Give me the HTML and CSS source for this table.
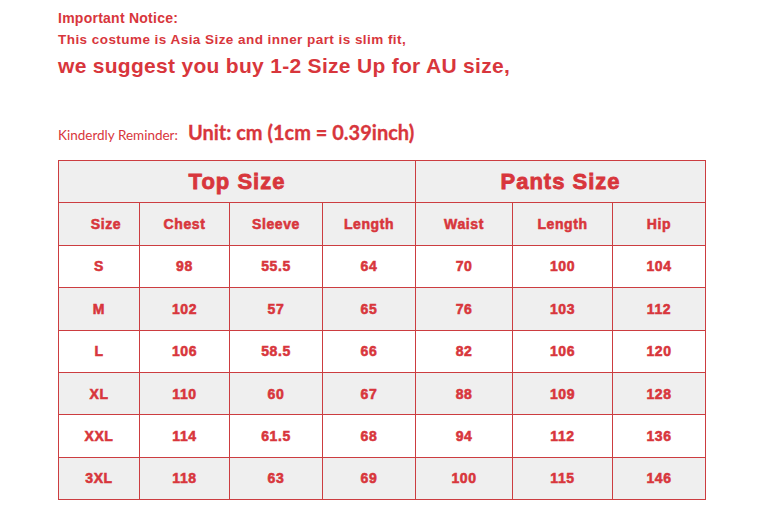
FILE: index.html
```html
<!DOCTYPE html>
<html lang="en">
<head>
<meta charset="utf-8">
<title>Size Chart</title>
<link rel="stylesheet" href="styles.css">
</head>
<body>
<div class="page">
  <div class="notice-title">Important Notice:</div>
  <div class="notice-line">This costume is Asia Size and inner part is slim fit,</div>
  <div class="notice-big">we suggest you buy 1-2 Size Up for AU size,</div>
  <div class="reminder"><span class="reminder-label">Kinderdly Reminder:</span><span class="reminder-unit">Unit: cm (1cm = 0.39inch)</span></div>
  <table class="chart">
    <colgroup>
      <col class="c1"><col class="c2"><col class="c3"><col class="c4"><col class="c5"><col class="c6"><col class="c7">
    </colgroup>
    <tr class="shade group">
      <td colspan="4">Top Size</td>
      <td colspan="3">Pants Size</td>
    </tr>
    <tr class="shade">
      <td class="size-head">Size</td><td>Chest</td><td>Sleeve</td><td>Length</td><td>Waist</td><td>Length</td><td>Hip</td>
    </tr>
    <tr><td>S</td><td>98</td><td>55.5</td><td>64</td><td>70</td><td>100</td><td>104</td></tr>
    <tr class="shade"><td>M</td><td>102</td><td>57</td><td>65</td><td>76</td><td>103</td><td>112</td></tr>
    <tr><td>L</td><td>106</td><td>58.5</td><td>66</td><td>82</td><td>106</td><td>120</td></tr>
    <tr class="shade"><td>XL</td><td>110</td><td>60</td><td>67</td><td>88</td><td>109</td><td>128</td></tr>
    <tr><td>XXL</td><td>114</td><td>61.5</td><td>68</td><td>94</td><td>112</td><td>136</td></tr>
    <tr class="shade"><td>3XL</td><td>118</td><td>63</td><td>69</td><td>100</td><td>115</td><td>146</td></tr>
  </table>
</div>
</body>
</html>
```

FILE: styles.css
```css
html, body {
  margin: 0;
  padding: 0;
  background: #ffffff;
}

.page {
  padding: 8px 0 0 58px;
  color: #d8363c;
  font-family: "Liberation Sans", Arial, sans-serif;
  font-weight: bold;
}

.notice-title {
  font-size: 14px;
  line-height: 21px;
  letter-spacing: 0.25px;
}

.notice-line {
  font-size: 13.5px;
  line-height: 21px;
  letter-spacing: 0.45px;
}

.notice-big {
  font-size: 21px;
  line-height: 31px;
  letter-spacing: 0.3px;
}

.reminder {
  margin-top: 38px;
  font-family: Lato, "Open Sans", sans-serif;
  font-size: 20px;
  line-height: 26px;
  color: #d8363c;
}

.reminder-label {
  font-size: 13.5px;
  font-weight: normal;
  line-height: 1;
}

.reminder-unit {
  font-weight: bold;
  margin-left: 10px;
  -webkit-text-stroke: 0.3px #d8363c;
}

.chart {
  margin-top: 15px;
  border-collapse: collapse;
  table-layout: fixed;
  width: 648px;
  font-family: "Liberation Sans", Arial, sans-serif;
  font-weight: bold;
  font-size: 14px;
  letter-spacing: 0.6px;
  -webkit-text-stroke: 0.55px #d8363c;
  color: #d8363c;
}

.c1 { width: 81px; }
.c2 { width: 90px; }
.c3 { width: 93px; }
.c4 { width: 93px; }
.c5 { width: 97px; }
.c6 { width: 100px; }
.c7 { width: 93px; }

.chart tr {
  height: 42.375px;
}

.chart td {
  border: 1px solid #cc3d40;
  text-align: center;
  vertical-align: middle;
  padding: 0;
  background: #ffffff;
}

.chart tr.shade td {
  background: #efefef;
}

.chart tr.group td {
  font-size: 22px;
  letter-spacing: 1px;
  -webkit-text-stroke: 0.8px #d8363c;
}

.chart td.size-head {
  padding-left: 14px;
}
```
